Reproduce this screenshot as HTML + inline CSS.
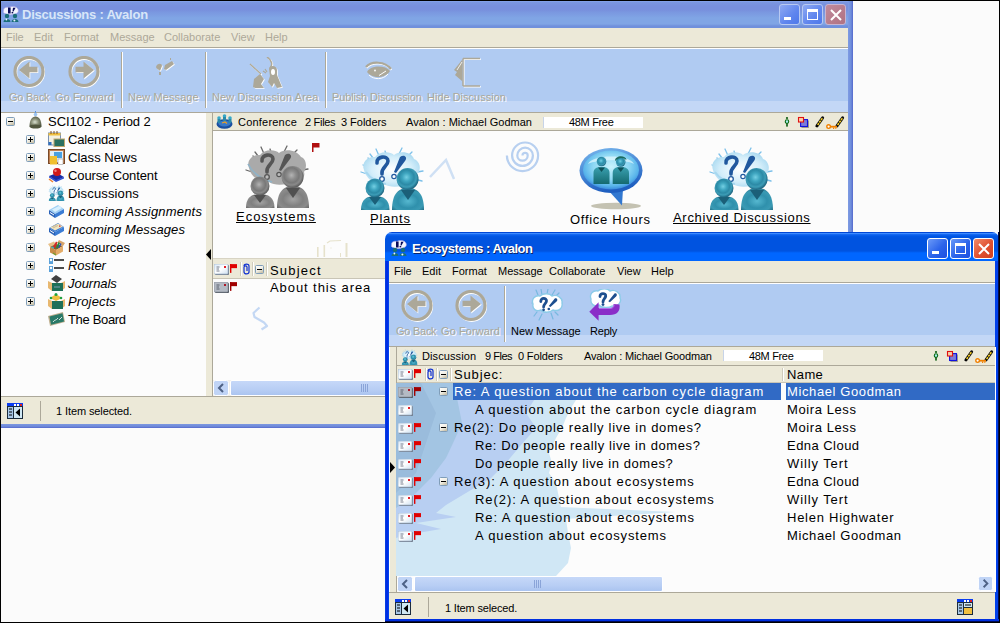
<!DOCTYPE html>
<html><head><meta charset="utf-8"><style>
*{margin:0;padding:0;box-sizing:border-box}
html,body{width:1000px;height:623px;overflow:hidden;background:#fbfbfb;font-family:"Liberation Sans",sans-serif;font-size:11px;color:#000}
.a{position:absolute}
.t{position:absolute;white-space:nowrap;line-height:11px}
.tr{position:absolute;white-space:nowrap;line-height:13px;font-size:13px}
.lt{position:absolute;white-space:nowrap;line-height:13px;font-size:13px;letter-spacing:0.85px}
.lbl{position:absolute;white-space:nowrap;line-height:13px;font-size:13px;letter-spacing:0.6px}
.u{text-decoration:underline}
.dis{position:absolute;white-space:nowrap;line-height:11px;color:#aca899;text-shadow:1px 1px 0 #fff}
.sep{position:absolute;width:2px;border-left:1px solid #aca899;border-right:1px solid #fff}
.cb{position:absolute;width:21px;height:21px;border:1px solid #fff;border-radius:3px}
#frame{position:absolute;left:0;top:0;width:1000px;height:623px;border:1px solid #000;z-index:50;pointer-events:none}
</style></head><body>
<svg width="0" height="0" style="position:absolute">
<defs>
  <radialGradient id="gTeal" cx="0.45" cy="0.42" r="0.62"><stop offset="0" stop-color="#74cfe3"/><stop offset="0.3" stop-color="#3fa6c0"/><stop offset="0.55" stop-color="#2c8aa6"/><stop offset="0.72" stop-color="#3c9cb6"/><stop offset="0.88" stop-color="#236f8a"/><stop offset="1" stop-color="#185a72"/></radialGradient>
  <radialGradient id="gTealB" cx="0.5" cy="0.6" r="0.7"><stop offset="0" stop-color="#56b8d0"/><stop offset="0.45" stop-color="#2f90ac"/><stop offset="0.7" stop-color="#3a9ab4"/><stop offset="1" stop-color="#175a72"/></radialGradient>
  <radialGradient id="gGray" cx="0.45" cy="0.42" r="0.62"><stop offset="0" stop-color="#b4b4b4"/><stop offset="0.3" stop-color="#8e8e8e"/><stop offset="0.55" stop-color="#787878"/><stop offset="0.72" stop-color="#8a8a8a"/><stop offset="0.88" stop-color="#656565"/><stop offset="1" stop-color="#505050"/></radialGradient>
  <radialGradient id="gGrayB" cx="0.5" cy="0.6" r="0.7"><stop offset="0" stop-color="#a4a4a4"/><stop offset="0.45" stop-color="#808080"/><stop offset="0.7" stop-color="#8c8c8c"/><stop offset="1" stop-color="#555"/></radialGradient>
  <radialGradient id="gCloud" cx="0.5" cy="0.5" r="0.6"><stop offset="0" stop-color="#ffffff"/><stop offset="0.6" stop-color="#d4eefa"/><stop offset="1" stop-color="#9fd4ee"/></radialGradient>
  <radialGradient id="gBub" cx="0.45" cy="0.4" r="0.6"><stop offset="0" stop-color="#b9ecfb"/><stop offset="0.6" stop-color="#7ccdf0"/><stop offset="1" stop-color="#2d7fd0"/></radialGradient>

  <!-- people + cloud, teal -->
  <symbol id="pplT" viewBox="0 0 64 64">
    <g stroke="#7cc0ea" stroke-width="1.3" stroke-linecap="round">
      <path d="M8 12l5 5M16 3l4 9M25 5l2 6M42 2l-4 8M52 6l-5 5M57 26l6-1M58 34l4 1M1 26l6 2M3 19l6 2M10 8l3 4"/>
    </g>
    <path d="M4 24 C1 16 8 10 15 11 C19 5 30 5 34 9 C40 4 52 6 54 13 C60 15 62 24 57 28 C60 34 54 38 48 36 C42 42 30 42 24 38 C16 40 6 33 4 24Z" fill="url(#gCloud)"/>
    <path d="M6 26 C10 32 18 37 26 38" stroke="#a8d8f0" stroke-width="2" fill="none"/>
    <path d="M17 17 C16 10 28 9 28 15 C28 20 21 21 22 28" fill="none" stroke="#20589e" stroke-width="3.6" stroke-linecap="round"/>
    <circle cx="22" cy="33" r="2.3" fill="#fff" stroke="#20589e" stroke-width="1.3"/>
    <path d="M40 11 C44 8 48 11 45 15 L36 27 L34 26Z" fill="#20589e"/>
    <circle cx="34" cy="30.5" r="2.2" fill="#fff" stroke="#20589e" stroke-width="1.2"/>
    <path d="M1 64 C1 53 7 50 15 50 C23 50 29.5 53 29.5 64Z" fill="url(#gTealB)"/>
    <path d="M9 51 L15 59 L21 51Z" fill="#1b5f78"/>
    <circle cx="15" cy="42" r="9.5" fill="url(#gTeal)"/>
    <path d="M32 64 C32 47 39 42 48 42 C57 42 64 47 64 64Z" fill="url(#gTealB)"/>
    <path d="M41 44 L48 54 L55 44Z" fill="#1b5f78"/>
    <circle cx="47.6" cy="33" r="11" fill="url(#gTeal)"/>
  </symbol>
  <!-- people + cloud, gray -->
  <symbol id="pplG" viewBox="0 0 64 64">
    <g stroke="#6a6a6a" stroke-width="1.3" stroke-linecap="round">
      <path d="M8 12l5 5M16 3l4 9M25 5l2 6M42 2l-4 8M52 6l-5 5M57 26l6-1M1 26l6 2M10 8l3 4"/>
    </g>
    <path d="M4 24 C1 16 8 10 15 11 C19 5 30 5 34 9 C40 4 52 6 56 13 C62 15 62 24 59 28 C61 34 54 38 48 36 C42 42 30 42 24 38 C16 40 6 33 4 24Z" fill="#aaaaaa"/>
    <path d="M3 20 C8 30 18 36 27 38" stroke="#8fb3c8" stroke-width="1.6" fill="none"/>
    <path d="M17 17 C16 10 28 9 28 15 C28 20 21 21 22 28" fill="none" stroke="#555" stroke-width="3.6" stroke-linecap="round"/>
    <circle cx="22" cy="33" r="2.3" fill="#bbb" stroke="#555" stroke-width="1.3"/>
    <path d="M40 11 C44 8 48 11 45 15 L36 27 L34 26Z" fill="#555"/>
    <circle cx="34" cy="30.5" r="2.2" fill="#bbb" stroke="#555" stroke-width="1.2"/>
    <path d="M1 64 C1 53 7 50 15 50 C23 50 29.5 53 29.5 64Z" fill="url(#gGrayB)"/>
    <path d="M9 51 L15 59 L21 51Z" fill="#505050"/>
    <circle cx="15" cy="42" r="9.5" fill="url(#gGray)"/>
    <path d="M32 64 C32 47 39 42 48 42 C57 42 64 47 64 64Z" fill="url(#gGrayB)"/>
    <path d="M41 44 L48 54 L55 44Z" fill="#505050"/>
    <circle cx="47.6" cy="33" r="11" fill="url(#gGray)"/>
  </symbol>
  <!-- cloud with ?! small (toolbar) -->
  <symbol id="cloudQ" viewBox="0 0 32 32">
    <g stroke="#78b8e0" stroke-width="1.2" stroke-linecap="round"><path d="M5 1l2 5M10 0l1 6M17 0l-1 5M24 1l-3 5M28 4l-3 3M3 27l3-4M8 31l3-6M22 30l-2-6M27 26l-3-3M1 14h2M31 14h-2"/></g>
    <path d="M2 15 C0 10 4 6 9 7 C12 4 19 4 21 7 C26 5 32 9 31 14 C32 19 28 23 22 21 C19 24 12 24 10 21 C5 23 1 20 2 15Z" fill="#fff" stroke="#8ccbe8" stroke-width="1.4"/>
    <path d="M9.8 12.5 C9.5 8.5 15.8 8.5 15.5 12 C15.3 14.5 12.6 15 12.6 18" fill="none" stroke="#1d4f8f" stroke-width="2.8" stroke-linecap="round"/>
    <circle cx="12.6" cy="20.8" r="1.4" fill="#1d4f8f"/>
    <path d="M24 9.3 C26.2 8.6 27.2 11 25.6 12.4 L19.4 18 L17.8 17Z" fill="#1d4f8f"/>
    <circle cx="17.8" cy="20" r="1.3" fill="#1d4f8f"/>
  </symbol>
  <!-- envelope -->
  <linearGradient id="gEnv" x1="0" y1="0" x2="1" y2="1"><stop offset="0" stop-color="#d8e8f8"/><stop offset="0.5" stop-color="#ffffff"/><stop offset="1" stop-color="#cfe0f0"/></linearGradient>
  <symbol id="env" viewBox="0 0 15 11">
    <rect x="1" y="1" width="14" height="10" rx="1" fill="#6a7484"/>
    <rect x="0" y="0" width="14" height="10" rx="1" fill="url(#gEnv)" stroke="#a8bcd0" stroke-width="0.8"/>
    <path d="M2.5 3h3M2.5 5h2.5M2.5 7h3" stroke="#6a7080" stroke-width="0.9"/>
    <rect x="10" y="2" width="2" height="2" fill="#e02028"/>
  </symbol>
  <symbol id="envG" viewBox="0 0 15 11">
    <rect x="1" y="1" width="14" height="10" rx="1" fill="#4a525c"/>
    <rect x="0" y="0" width="14" height="10" rx="1" fill="#b4bac4" stroke="#8a929c" stroke-width="0.8"/>
    <path d="M2.5 3h3M2.5 5h2.5M2.5 7h3" stroke="#505864" stroke-width="0.9"/>
    <rect x="10" y="2" width="2" height="2" fill="#b01828"/>
  </symbol>
  <symbol id="flag" viewBox="0 0 8 10"><rect x="0" y="0" width="1.6" height="10" fill="currentColor"/><rect x="0" y="0" width="8" height="4.6" fill="currentColor"/></symbol>
  <linearGradient id="gBox" x1="0" y1="0" x2="0.6" y2="1"><stop offset="0" stop-color="#ffffff"/><stop offset="0.6" stop-color="#f0eee4"/><stop offset="1" stop-color="#c8c0a8"/></linearGradient>
  <symbol id="minus" viewBox="0 0 9 9"><rect x="0.5" y="0.5" width="8" height="8" rx="1" fill="url(#gBox)" stroke="#7f9db9"/><rect x="2" y="4" width="5" height="1" fill="#000"/></symbol>
  <symbol id="plus" viewBox="0 0 9 9"><rect x="0.5" y="0.5" width="8" height="8" rx="1" fill="url(#gBox)" stroke="#7f9db9"/><rect x="2" y="4" width="5" height="1" fill="#000"/><rect x="4" y="2" width="1" height="5" fill="#000"/></symbol>
  <symbol id="clip" viewBox="0 0 7 12"><path d="M1 3 C1 0.5 6 0.5 6 3 V9 C6 11.5 1 11.5 1 9 V4 C1 2.5 4 2.5 4 4 V8" fill="none" stroke="#1030d0" stroke-width="1.2"/></symbol>
  <!-- circle arrows (disabled) -->
  <symbol id="goBack" viewBox="0 0 32 32">
    <circle cx="16" cy="15.5" r="14" fill="none" stroke="#fff" stroke-width="3" transform="translate(0.7 0.9)"/>
    <circle cx="16" cy="15.5" r="14" fill="none" stroke="#aca899" stroke-width="3.2"/>
    <path d="M6 14 L16.5 5.5 V10.7 H24.5 V16.2 H16.5 V22.6Z" fill="#fff" transform="translate(0.8 0.8)"/>
    <path d="M6 14 L16.5 5.5 V10.7 H24.5 V16.2 H16.5 V22.6Z" fill="#aca899"/>
  </symbol>
  <symbol id="goFwd" viewBox="0 0 32 32">
    <circle cx="16" cy="15.5" r="14" fill="none" stroke="#fff" stroke-width="3" transform="translate(0.7 0.9)"/>
    <circle cx="16" cy="15.5" r="14" fill="none" stroke="#aca899" stroke-width="3.2"/>
    <path d="M26 14 L15.5 5.5 V10.7 H7.5 V16.2 H15.5 V22.6Z" fill="#fff" transform="translate(0.8 0.8)"/>
    <path d="M26 14 L15.5 5.5 V10.7 H7.5 V16.2 H15.5 V22.6Z" fill="#aca899"/>
  </symbol>
  <!-- status icons -->
  <symbol id="stL" viewBox="0 0 16 16">
    <rect x="0" y="0" width="16" height="16" fill="#1c2c3c"/>
    <rect x="0" y="0" width="16" height="3" fill="#0a3cf0"/>
    <rect x="7" y="1" width="2" height="2" fill="#fff"/><rect x="10" y="1" width="2" height="2" fill="#fff"/><rect x="13" y="1" width="2" height="2" fill="#e02020"/>
    <rect x="1" y="4" width="5" height="11" fill="#a8c8e8"/>
    <rect x="7" y="4" width="8" height="11" fill="#d0e8f4"/>
    <path d="M2 6h3M2 9h3M2 12h3" stroke="#000" stroke-width="1.2"/>
    <path d="M13 5.5 L8.5 9.5 L13 13.5Z" fill="#000"/>
  </symbol>
  <symbol id="stR" viewBox="0 0 16 16">
    <rect x="0" y="0" width="16" height="16" fill="#1c2c3c"/>
    <rect x="0" y="0" width="16" height="3" fill="#0a3cf0"/>
    <rect x="7" y="1" width="2" height="2" fill="#fff"/><rect x="10" y="1" width="2" height="2" fill="#fff"/><rect x="13" y="1" width="2" height="2" fill="#e02020"/>
    <rect x="1" y="4" width="5" height="11" fill="#a8c8e8"/>
    <rect x="7" y="4" width="8" height="4" fill="#d0e8f4"/>
    <rect x="7" y="9" width="8" height="6" fill="#f0c040"/>
    <path d="M2 6h3M2 9h3M2 12h3M8 6h6" stroke="#000" stroke-width="1.2"/>
  </symbol>
  <!-- header icons -->
  <symbol id="hdrIcons" viewBox="0 0 62 16">
    <circle cx="4" cy="3" r="1.1" fill="#0a5a10"/>
    <ellipse cx="4" cy="6.6" rx="1.7" ry="1.9" fill="#a8ecf4" stroke="#0a6a10" stroke-width="1.1"/>
    <rect x="3.2" y="8.4" width="1.6" height="3.2" fill="#0a5a10"/>
    <rect x="17.6" y="4.6" width="6.9" height="6.9" fill="#7c7cd8" stroke="#1010e0" stroke-width="1.1"/>
    <rect x="25" y="5.5" width="0.8" height="6.8" fill="#8a8878"/><rect x="18.5" y="12" width="7.3" height="0.8" fill="#8a8878"/>
    <rect x="15.5" y="2.5" width="5" height="4.5" fill="#f8d0a8" stroke="#e01010" stroke-width="1.1"/>
    <path d="M34 10.8 L39.6 2.8" stroke="#101010" stroke-width="3" stroke-linecap="round"/>
    <path d="M34.6 10 L39.4 3.2" stroke="#f8d020" stroke-width="1.5" stroke-dasharray="2.2 0.8"/>
    <path d="M33 11.8 L34.5 10" stroke="#000" stroke-width="1.4"/>
    <path d="M54 10.8 L59.6 2.8" stroke="#101010" stroke-width="3" stroke-linecap="round"/>
    <path d="M54.6 10 L59.4 3.2" stroke="#f8d020" stroke-width="1.5" stroke-dasharray="2.2 0.8"/>
    <circle cx="45.6" cy="11.6" r="1.8" fill="#fff" stroke="#f08000" stroke-width="1.4"/>
    <rect x="47" y="10.8" width="7" height="1.8" fill="#f08000"/>
    <rect x="50" y="12.4" width="1.2" height="1.6" fill="#f08000"/><rect x="52.2" y="12.4" width="1.2" height="1.4" fill="#f08000"/>
  </symbol>
  <!-- scroll buttons -->
  <symbol id="sbL" viewBox="0 0 16 16">
    <rect x="0.5" y="0.5" width="15" height="15" rx="2" fill="#c0d4f6" stroke="#fff"/>
    <path d="M10 4 L6 8 L10 12" fill="none" stroke="#4d6185" stroke-width="2"/>
  </symbol>
  <symbol id="sbR" viewBox="0 0 16 16">
    <rect x="0.5" y="0.5" width="15" height="15" rx="2" fill="#c0d4f6" stroke="#fff"/>
    <path d="M6 4 L10 8 L6 12" fill="none" stroke="#4d6185" stroke-width="2"/>
  </symbol>
  <!-- title icon -->
  <symbol id="ttlIcon" viewBox="0 0 16 16">
    <path d="M0.5 5 C0 2 3 0.5 6 1.5 C8 0 13 0 14.5 2.5 C16 4 15.5 7 13 7.5 C11 9 4 9 2.5 7.5 C0.5 7.5 0 6 0.5 5Z" fill="#f4f6ff" stroke="#a8a0e8" stroke-width="0.6"/>
    <path d="M5 1.5 h2.6 v6 h-2.6z" fill="#0a0a5a"/>
    <path d="M10 1.8 L12.6 1.8 L10.5 5.5 L9.5 5.5z" fill="#0a0a5a"/><rect x="8.6" y="6" width="1.6" height="1.4" fill="#0a0a5a"/>
    <circle cx="4" cy="10" r="2.2" fill="#1a6e78"/><path d="M0.5 16 C0.5 12 7.5 12 7.5 16Z" fill="#1a6e78"/>
    <circle cx="3.4" cy="13.5" r="0.9" fill="#e8f4ff"/>
    <circle cx="12" cy="10" r="2.2" fill="#1a6e78"/><path d="M8.5 16 C8.5 12 15.5 12 15.5 16Z" fill="#1a6e78"/>
    <circle cx="11.4" cy="14.6" r="1" fill="#e8f4ff"/>
  </symbol>
</defs>
</svg>

<!-- ============ W1 background window ============ -->
<div id="w1" class="a" style="left:0;top:0;width:853px;height:428px;">
  <div class="a" style="left:0;top:0;width:853px;height:28px;background:linear-gradient(#8aaaf0 0,#8aaaf0 1px,#7b97e0 2px,#7890dd 6px,#7890dd 10px,#7a97e0 12px,#80a5e5 18px,#80a5e5 24px,#7090dc 26px,#7090dc 28px)"></div>
  <svg class="a" style="left:3px;top:6px" width="16" height="16"><use href="#ttlIcon"/></svg>
  <div class="t" style="left:22px;top:9px;font-size:13px;font-weight:bold;color:#d8e6f8;letter-spacing:-0.3px;letter-spacing:-0.23px">Discussions : Avalon</div>
  <!-- caption buttons inactive -->
  <div class="cb" style="left:779px;top:4px;background:linear-gradient(135deg,#8ea9f2,#5f85ee 60%,#4e78ea);border-color:#b8c9f2"><div class="a" style="left:4px;top:12px;width:7px;height:3px;background:#fff"></div></div>
  <div class="cb" style="left:802px;top:4px;background:linear-gradient(135deg,#8ea9f2,#5f85ee 60%,#4e78ea);border-color:#b8c9f2"><div class="a" style="left:4px;top:4px;width:11px;height:11px;border:1px solid #fff;border-top-width:3px"></div></div>
  <div class="cb" style="left:825px;top:4px;background:linear-gradient(135deg,#c08a9c,#b07282);border-color:#c8b4d0">
    <svg class="a" style="left:4px;top:4px" width="12" height="12"><path d="M1 1L11 11M11 1L1 11" stroke="#fff" stroke-width="2"/></svg></div>
  <!-- right border -->
  <div class="a" style="left:848px;top:0;width:5px;height:428px;background:linear-gradient(90deg,#7e9be3,#6f8edb 60%,#5468cc)"></div>
  <div class="a" style="left:0;top:424px;width:853px;height:4px;background:linear-gradient(#7d98e0,#6f8ad9 60%,#5468cc)"></div>
  <!-- menu -->
  <div class="a" style="left:1px;top:28px;width:847px;height:20px;background:#ece9d8"></div>
  <div class="a" style="left:1px;top:47px;width:847px;height:1px;background:#aca899"></div>
  <div class="a" style="left:1px;top:48px;width:847px;height:1px;background:#fff"></div>
  <div style="color:#aca899">
    <div class="t" style="left:6px;top:32px">File</div>
    <div class="t" style="left:34px;top:32px">Edit</div>
    <div class="t" style="left:64px;top:32px">Format</div>
    <div class="t" style="left:110px;top:32px">Message</div>
    <div class="t" style="left:164px;top:32px">Collaborate</div>
    <div class="t" style="left:231px;top:32px">View</div>
    <div class="t" style="left:265px;top:32px">Help</div>
  </div>
  <!-- toolbar -->
  <div class="a" style="left:1px;top:49px;width:847px;height:52px;background:#b0cbf2"></div>
  <div class="a" style="left:1px;top:101px;width:847px;height:11px;background:#c3d7f6"></div>
  <div class="a" style="left:1px;top:112px;width:847px;height:1px;background:#aca899"></div>
  <div class="sep" style="left:121px;top:52px;height:56px"></div>
  <div class="sep" style="left:205px;top:52px;height:56px"></div>
  <div class="sep" style="left:325px;top:52px;height:56px"></div>
  <svg class="a" style="left:13px;top:56px" width="32" height="32"><use href="#goBack"/></svg>
  <svg class="a" style="left:68px;top:56px" width="32" height="32"><use href="#goFwd"/></svg>
  <!-- disabled new message -->
  <svg class="a" style="left:154px;top:57px" width="22" height="21" viewBox="0 0 22 21">
    <path d="M2 10 C3 6 8 6 8 9 L6 14 C5 12 3 13 2 10Z M11 8 L18 4 L20 7 L12 13 L10 12Z M4 16 l2 3 M16 1 l1 2" fill="#fff" transform="translate(0.8 0.8)"/>
    <path d="M2 10 C3 6 8 6 8 9 L6 14 C5 12 3 13 2 10Z M11 8 L18 4 L20 7 L12 13 L10 12Z M5 15 h2v3h-2z M16 1 h1v2h-1z" fill="#aca899"/>
  </svg>
  <!-- disabled new discussion area -->
  <svg class="a" style="left:249px;top:57px" width="34" height="32" viewBox="0 0 34 32">
    <g transform="translate(0.8 0.8)" fill="#fff" stroke="none">
      <path d="M18 0 C23 3 24 8 21 11" fill="none" stroke="#fff" stroke-width="1.5"/>
      <path d="M1 7 L12 17" stroke="#fff" stroke-width="1.4"/>
      <path d="M4 30 L5 22 L11 17 L15 22 L12 27 L15 31 L6 31Z"/>
      <path d="M20 12 C20 8 28 8 28 13 L28 18 L33 30 L28 31 L25 26 L23 30 L19 25 L21 19Z"/>
    </g>
    <path d="M18 0 C23 3 24 8 21 11" fill="none" stroke="#aca899" stroke-width="1.5"/>
    <path d="M1 7 L12 17" stroke="#aca899" stroke-width="1.4"/>
    <path d="M4 30 L5 22 L11 17 L15 22 L12 27 L15 31 L6 31Z" fill="#aca899"/>
    <path d="M20 12 C20 8 28 8 28 13 L28 18 L33 30 L28 31 L25 26 L23 30 L19 25 L21 19Z" fill="#aca899"/>
    <ellipse cx="24" cy="15" rx="2" ry="3" fill="#fff"/>
    <path d="M14 14 l3 2 M16 12 l2 3" stroke="#aca899" stroke-width="1.2"/>
  </svg>
  <!-- eye -->
  <svg class="a" style="left:365px;top:60px" width="27" height="22" viewBox="0 0 27 22">
    <path d="M1 7 C6 1 20 1 26 9" fill="none" stroke="#fff" stroke-width="2" transform="translate(0.6 0.8)"/>
    <path d="M1 7 C6 1 20 1 26 9" fill="none" stroke="#aca899" stroke-width="2.2"/>
    <path d="M2 12 C6 5 20 5 25 11 C20 19 7 19 2 12 Z" fill="#aca899"/>
    <path d="M4 15 C9 20 18 20 23 14" fill="none" stroke="#fff" stroke-width="1"/>
    <path d="M14 15.5 L21 11" fill="none" stroke="#fff" stroke-width="1"/>
    <circle cx="10" cy="10.5" r="0.9" fill="#fff"/>
  </svg>
  <!-- hide -->
  <svg class="a" style="left:453px;top:57px" width="29" height="31" viewBox="0 0 29 31">
    <path d="M10 1.5 H27 M10 29 H27 M10 1.5 V29" fill="none" stroke="#fff" stroke-width="1.5" transform="translate(0.8 0.8)"/>
    <path d="M10 1.5 H27 M10 29 H27 M10 1.5 V29" fill="none" stroke="#aca899" stroke-width="1.5"/>
    <path d="M9 3 L1 13 L4 15 L2 18 L9 24Z" fill="#aca899"/>
    <path d="M9 5 L4 13" stroke="#fff" stroke-width="0.8"/>
  </svg>
  <div class="dis" style="left:9px;top:92px;letter-spacing:-0.26px">Go Back</div>
  <div class="dis" style="left:55px;top:92px;letter-spacing:0.1px">Go Forward</div>
  <div class="dis" style="left:128px;top:92px;letter-spacing:0.1px">New Message</div>
  <div class="dis" style="left:212px;top:92px;letter-spacing:0.14px">New Discussion Area</div>
  <div class="dis" style="left:332px;top:92px;letter-spacing:-0.2px;letter-spacing:-0.14px">Publish Discussion</div>
  <div class="dis" style="left:427px;top:92px">Hide Discussion</div>

  <!-- tree panel -->
  <div class="a" style="left:1px;top:113px;width:205px;height:283px;background:#fcfcfc"></div>
  <div class="a" style="left:206px;top:113px;width:6px;height:283px;background:#ece9d8"></div>
  <div class="a" style="left:212px;top:113px;width:1px;height:283px;background:#aca899"></div>
  <svg class="a" style="left:206px;top:249px" width="6" height="11"><path d="M5 0 L0 5.5 L5 11Z" fill="#000"/></svg>
  <div id="tree">
    <svg class="a" style="left:6px;top:117px" width="9" height="9"><use href="#minus"/></svg>
    <svg class="a" style="left:29px;top:111px" width="13" height="18" viewBox="0 0 13 18">
      <defs><radialGradient id="gBell" cx="0.45" cy="0.55" r="0.6"><stop offset="0" stop-color="#d8e0d0"/><stop offset="0.5" stop-color="#8a9078"/><stop offset="1" stop-color="#4e5440"/></radialGradient></defs>
      <rect x="6" y="0" width="1" height="4" fill="#5a90d8"/><circle cx="6.5" cy="3.5" r="1.8" fill="#9cc4f0"/>
      <path d="M0.5 15.5 C0.5 9 3 5.5 6.5 5.5 C10 5.5 12.5 9 12.5 15.5 Z" fill="url(#gBell)"/>
      <ellipse cx="6.5" cy="15.5" rx="6" ry="2" fill="#50563e"/>
    </svg>
    <div class="tr" style="left:48px;top:115px;letter-spacing:-0.03px">SCI102 - Period 2</div>

    <svg class="a" style="left:26px;top:135px" width="9" height="9"><use href="#plus"/></svg>
    <svg class="a" style="left:26px;top:153px" width="9" height="9"><use href="#plus"/></svg>
    <svg class="a" style="left:26px;top:171px" width="9" height="9"><use href="#plus"/></svg>
    <svg class="a" style="left:26px;top:189px" width="9" height="9"><use href="#plus"/></svg>
    <svg class="a" style="left:26px;top:207px" width="9" height="9"><use href="#plus"/></svg>
    <svg class="a" style="left:26px;top:225px" width="9" height="9"><use href="#plus"/></svg>
    <svg class="a" style="left:26px;top:243px" width="9" height="9"><use href="#plus"/></svg>
    <svg class="a" style="left:26px;top:261px" width="9" height="9"><use href="#plus"/></svg>
    <svg class="a" style="left:26px;top:279px" width="9" height="9"><use href="#plus"/></svg>
    <svg class="a" style="left:26px;top:297px" width="9" height="9"><use href="#plus"/></svg>

    <!-- calendar -->
    <svg class="a" style="left:48px;top:131px" width="17" height="16" viewBox="0 0 17 16">
      <rect x="0.5" y="2" width="12" height="12" fill="#f4f0e0" stroke="#7a90b0"/>
      <rect x="0.5" y="2" width="12" height="2.5" fill="#f0c040"/>
      <path d="M3 0v3M6 0v3M9 0v3" stroke="#805020"/>
      <rect x="0.5" y="11" width="3" height="3" fill="#3070c0"/>
      <rect x="6" y="8" width="10.5" height="7.5" fill="#2a7060" stroke="#c0a870"/>
    </svg>
    <!-- class news -->
    <svg class="a" style="left:48px;top:149px" width="17" height="16" viewBox="0 0 17 16">
      <rect x="0.5" y="0.5" width="16" height="14" fill="#c08050" stroke="#7a4a28"/>
      <rect x="2" y="2" width="13" height="11" fill="#e0eef8"/>
      <rect x="6" y="3" width="8" height="6" fill="#4aa0e0"/>
      <rect x="2" y="7" width="7" height="8.5" fill="#f0c030"/>
      <rect x="10" y="10" width="5" height="5.5" fill="#fff" stroke="#888" stroke-width="0.5"/>
    </svg>
    <!-- course content -->
    <svg class="a" style="left:48px;top:167px" width="17" height="16" viewBox="0 0 17 16">
      <path d="M1 9 L9 6 L16 10 L8 14Z" fill="#1a2aa0"/><path d="M1 9 L8 13 L16 10 L16 11.5 L8 15 L1 10.5Z" fill="#3050d0"/>
      <circle cx="9" cy="5" r="4" fill="#d01818"/><circle cx="7.5" cy="3.8" r="1.2" fill="#f08080"/>
      <path d="M1 12 L5 15" stroke="#f08030" stroke-width="1.5"/>
    </svg>
    <!-- discussions -->
    <svg class="a" style="left:48px;top:185px" width="17" height="16" viewBox="0 0 64 64"><use href="#pplT"/></svg>
    <!-- incoming assignments -->
    <svg class="a" style="left:48px;top:203px" width="17" height="16" viewBox="0 0 17 16">
      <path d="M1 7 L10 2 L16 6 L7 11Z" fill="#a0d0f4"/>
      <path d="M4 6.5 L11 3 L14 5 L7 9Z" fill="#d8f0ff"/>
      <path d="M1 7 L7 11 L7 15 L1 11Z" fill="#2a62b8"/>
      <path d="M7 11 L16 6 L16 10 L7 15Z" fill="#3a7cd4"/>
      <path d="M2 9.5 L6 12" stroke="#fff" stroke-width="1"/>
    </svg>
    <!-- incoming messages -->
    <svg class="a" style="left:48px;top:221px" width="17" height="16" viewBox="0 0 17 16">
      <path d="M1 7 L10 2 L16 6 L7 11Z" fill="#3a7cd4"/>
      <path d="M2 6.5 L10 2.5 L15 5.5 L7 9.5Z" fill="#f0e4c0"/>
      <path d="M4 6 L9 3.5 M5 7 L10 4.5" stroke="#b0a080" stroke-width="0.6"/>
      <rect x="11" y="4.5" width="1.5" height="1.2" fill="#d02020"/>
      <path d="M1 7 L7 11 L7 15 L1 11Z" fill="#2a62b8"/>
      <path d="M7 11 L16 6 L16 10 L7 15Z" fill="#3a7cd4"/>
      <path d="M2 9.5 L6 12" stroke="#fff" stroke-width="1"/>
    </svg>
    <!-- resources -->
    <svg class="a" style="left:48px;top:239px" width="17" height="17" viewBox="0 0 17 17">
      <path d="M2 8 L0 5 L6 2.5 L8 5.5Z" fill="#e8c088"/>
      <path d="M15 7 L17 4 L11 1 L9 4Z" fill="#d8a468"/>
      <path d="M2 8 L8 5 L15 7 L8 11Z" fill="#8a5a28"/>
      <path d="M5 8 L8 2.5 L9.5 3.5 L7 9Z" fill="#d02828"/>
      <path d="M8 9 L10.5 3 L12 4 L9.5 9.5Z" fill="#208848"/>
      <path d="M10 9 L12.5 4 L13.5 5 L11 9.5Z" fill="#2050c0"/>
      <circle cx="4.5" cy="9" r="1.5" fill="#40b0c0"/>
      <path d="M2 8 L8 11 L8 16.5 L2 13.5Z" fill="#c88c48"/>
      <path d="M8 11 L15 7 L15 12.5 L8 16.5Z" fill="#e4ac68"/>
      <path d="M5 14 L8 16" stroke="#70a030" stroke-width="1.2"/>
    </svg>
    <!-- roster -->
    <svg class="a" style="left:48px;top:257px" width="17" height="16" viewBox="0 0 17 16">
      <rect x="1" y="1" width="4" height="6" fill="#5aa0d8"/><rect x="1" y="9" width="4" height="6" fill="#5aa0d8"/>
      <circle cx="3" cy="3" r="1.2" fill="#fff"/><circle cx="3" cy="11" r="1.2" fill="#fff"/>
      <path d="M6 3 H16 M6 11 H16" stroke="#111" stroke-width="1.5"/>
    </svg>
    <!-- journals -->
    <svg class="a" style="left:48px;top:275px" width="17" height="16" viewBox="0 0 17 16">
      <path d="M0 6 L4 8 L4 16 L0 13Z M17 6 L13 8 L13 16 L17 13Z" fill="#e8b870"/>
      <path d="M3 4 L8 0 L14 4 L9 8Z" fill="#404040"/>
      <rect x="4" y="8" width="11" height="8" fill="#1f7058"/>
      <path d="M6 12 h6" stroke="#9ac" stroke-width="0.8"/>
    </svg>
    <!-- projects -->
    <svg class="a" style="left:48px;top:293px" width="17" height="16" viewBox="0 0 17 16">
      <path d="M0 6 L4 8 L4 16 L0 13Z M17 6 L13 8 L13 16 L17 13Z" fill="#e8b870"/>
      <path d="M2 5 L8 1 L14 5 L8 8Z" fill="#f0c040"/>
      <circle cx="8" cy="1.5" r="1.5" fill="#20a040"/><circle cx="3" cy="5" r="1.3" fill="#20a040"/><circle cx="13" cy="5" r="1.3" fill="#20a040"/>
      <rect x="4" y="8" width="11" height="8" fill="#1f7058"/>
    </svg>
    <!-- the board -->
    <svg class="a" style="left:48px;top:311px" width="17" height="16" viewBox="0 0 17 16">
      <path d="M0 5 L15 1 L17 11 L2 15Z" fill="#c0b090"/>
      <path d="M1.5 5.5 L14.5 2.2 L16 10.5 L3 13.8Z" fill="#2a7a68"/>
      <path d="M5 11 C7 8 8 10 10 7 M11 9 L14 6" stroke="#fff" stroke-width="0.8" fill="none"/>
    </svg>

    <div class="tr" style="left:68px;top:133px;letter-spacing:-0.19px">Calendar</div>
    <div class="tr" style="left:68px;top:151px;letter-spacing:0.03px">Class News</div>
    <div class="tr" style="left:68px;top:169px;letter-spacing:-0.12px">Course Content</div>
    <div class="tr" style="left:68px;top:187px;letter-spacing:0.15px">Discussions</div>
    <div class="tr" style="left:68px;top:205px;font-style:italic;letter-spacing:0.19px">Incoming Assignments</div>
    <div class="tr" style="left:68px;top:223px;font-style:italic;letter-spacing:0.08px">Incoming Messages</div>
    <div class="tr" style="left:68px;top:241px;letter-spacing:-0.03px">Resources</div>
    <div class="tr" style="left:68px;top:259px;font-style:italic;letter-spacing:-0.07px">Roster</div>
    <div class="tr" style="left:68px;top:277px;font-style:italic;letter-spacing:-0.04px">Journals</div>
    <div class="tr" style="left:68px;top:295px;font-style:italic;letter-spacing:0.13px">Projects</div>
    <div class="tr" style="left:68px;top:313px;letter-spacing:-0.33px">The Board</div>
  </div>

  <!-- right pane -->
  <div class="a" style="left:213px;top:113px;width:635px;height:283px;background:#fcfcfc"></div>
  <div class="a" style="left:213px;top:113px;width:635px;height:17px;background:#ece9d8"></div>
  <div class="a" style="left:213px;top:130px;width:635px;height:1px;background:#aca899"></div>
  <svg class="a" style="left:216px;top:114px" width="17" height="15" viewBox="0 0 17 15">
    <ellipse cx="8.5" cy="10" rx="8" ry="4.8" fill="#1a4fa0"/>
    <ellipse cx="8.5" cy="9.5" rx="6" ry="3" fill="#3a78c8"/>
    <path d="M6 9 l3 -1 l2 1.5" stroke="#f0a020" stroke-width="1.2" fill="none"/>
    <circle cx="3" cy="4" r="1.8" fill="#38a8c8"/><rect x="1.5" y="5" width="3" height="4" fill="#2a88a8"/>
    <circle cx="8.5" cy="2" r="1.8" fill="#38a8c8"/><rect x="7" y="3" width="3" height="4" fill="#2a88a8"/>
    <circle cx="14" cy="4" r="1.8" fill="#38a8c8"/><rect x="12.5" y="5" width="3" height="4" fill="#2a88a8"/>
  </svg>
  <div class="t" style="left:238px;top:117px;letter-spacing:0.21px">Conference</div>
  <div class="t" style="left:305px;top:117px;letter-spacing:-0.3px">2 Files</div>
  <div class="t" style="left:341px;top:117px;letter-spacing:-0.03px">3 Folders</div>
  <div class="t" style="left:406px;top:117px;letter-spacing:0.01px">Avalon : Michael Godman</div>
  <div class="a" style="left:543px;top:117px;width:100px;height:11px;background:#fff;border-left:1px solid #c8d4e8"></div>
  <div class="t" style="left:569px;top:117px;letter-spacing:-0.33px">48M Free</div>
  <svg class="a" style="left:783px;top:115px" width="62" height="16"><use href="#hdrIcons"/></svg>

  <!-- big icons -->
  <svg class="a" style="left:245px;top:144px" width="64" height="64"><use href="#pplG"/></svg>
  <svg class="a" style="left:312px;top:143px" width="8" height="9"><rect x="0" y="0" width="1.5" height="9" fill="#b01010"/><rect x="0" y="0" width="7.5" height="4.5" fill="#b01010"/></svg>
  <div class="lbl u" style="left:236px;top:210px;letter-spacing:0.98px">Ecosystems</div>
  <svg class="a" style="left:360px;top:146px" width="64" height="64"><use href="#pplT"/></svg>
  <div class="lbl u" style="left:370px;top:212px;letter-spacing:0.75px">Plants</div>
  <svg class="a" style="left:428px;top:157px" width="28" height="24" viewBox="0 0 28 24"><path d="M2 20 L18 3 L26 22" fill="none" stroke="#cfe0f4" stroke-width="2.5"/></svg>
  <svg class="a" style="left:505px;top:138px" width="35" height="35" viewBox="0 0 35 35">
    <path d="M17 17 A2 2 0 0 1 21 17 A4 4 0 0 1 13 17 A6 6 0 0 1 25 17 A8 8 0 0 1 9 17 A10 10 0 0 1 29 17 A12 12 0 0 1 5 17" fill="none" stroke="#b8d0f0" stroke-width="1.7" transform="translate(17.5 17.5) scale(1.3) translate(-17 -17)"/>
  </svg>
  <!-- office hours -->
  <svg class="a" style="left:578px;top:146px" width="66" height="64" viewBox="0 0 66 64">
    <defs>
      <radialGradient id="gOH" cx="0.5" cy="0.42" r="0.58"><stop offset="0" stop-color="#c8f2fc"/><stop offset="0.55" stop-color="#8ed8f4"/><stop offset="0.85" stop-color="#58b4ea"/><stop offset="1" stop-color="#3a8ade"/></radialGradient>
      <linearGradient id="gOHrim" x1="0" y1="0" x2="0.3" y2="1"><stop offset="0" stop-color="#7ab8ee"/><stop offset="1" stop-color="#1f5fc0"/></linearGradient>
      <linearGradient id="gOHb" x1="0" y1="0" x2="0" y2="1"><stop offset="0" stop-color="#3aa0b0"/><stop offset="1" stop-color="#156a70"/></linearGradient>
    </defs>
    <ellipse cx="38" cy="60" rx="25" ry="3.2" fill="#c4c2b2"/>
    <path d="M30 44 L44 59.5 L45 43Z" fill="#3278d0"/>
    <ellipse cx="33" cy="24.5" rx="31.5" ry="22.5" fill="url(#gOHrim)"/>
    <ellipse cx="33" cy="24" rx="28" ry="19.5" fill="url(#gOH)"/>
    <path d="M10 18 C14 8 52 8 56 18 C46 13 20 13 10 18Z" fill="#e4faff" opacity="0.7"/>
    <circle cx="23.5" cy="15.5" r="4.8" fill="url(#gTeal)"/>
    <path d="M15.5 38 V27 C15.5 22 19 21 23.5 21 C28 21 31.5 22 31.5 27 V38Z" fill="url(#gOHb)"/>
    <path d="M20 21.5 L23.5 26 L27 21.5Z" fill="#0f5058"/>
    <circle cx="42.7" cy="16" r="4.8" fill="url(#gTeal)"/>
    <path d="M37 15 C37 9 48 9 48.5 14 L46 12.5 C44 11.5 40 11.5 37 15Z" fill="#1b6a60"/>
    <path d="M34.7 38 V27 C34.7 22 38 21 42.7 21 C47 21 51 22 51 27 V38Z" fill="url(#gOHb)"/>
    <path d="M39.2 21.5 L42.7 26 L46.2 21.5Z" fill="#0f5058"/>
  </svg>
  <div class="lbl" style="left:570px;top:213px;letter-spacing:0.72px">Office Hours</div>
  <svg class="a" style="left:709px;top:146px" width="64" height="64"><use href="#pplT"/></svg>
  <div class="lbl u" style="left:673px;top:211px;letter-spacing:0.7px">Archived Discussions</div>

  <!-- faint arc -->
  <svg class="a" style="left:315px;top:238px" width="34" height="20" viewBox="0 0 34 20">
    <g fill="#e6e2cc"><rect x="2" y="9" width="1.6" height="10"/><rect x="8.5" y="7" width="1.6" height="12"/><rect x="25" y="15" width="1" height="4"/><rect x="30.5" y="5" width="2" height="14"/><rect x="15.5" y="9.5" width="1" height="1"/></g>
    <path d="M12 5 L15 3 L26 2.5" stroke="#e6e2cc" stroke-width="1.2" fill="none"/>
  </svg>

  <!-- lower list -->
  <div class="a" style="left:213px;top:258px;width:635px;height:1px;background:#d8d4c4"></div>
  <div class="a" style="left:213px;top:259px;width:635px;height:19px;background:#ece9d8"></div>
  <div class="a" style="left:213px;top:278px;width:635px;height:1px;background:#c9c5b6"></div>
  <svg class="a" style="left:214px;top:264px" width="15" height="11"><use href="#env"/></svg>
  <svg class="a" style="left:230px;top:264px;color:#e00000" width="7" height="9"><use href="#flag"/></svg>
  <div class="a" style="left:240px;top:262px;width:2px;height:14px;border-left:1px solid #d0ccbc;border-right:1px solid #fff"></div>
  <svg class="a" style="left:243px;top:263px" width="7" height="12"><use href="#clip"/></svg>
  <div class="a" style="left:252px;top:262px;width:2px;height:14px;border-left:1px solid #d0ccbc;border-right:1px solid #fff"></div>
  <svg class="a" style="left:255px;top:265px" width="9" height="9"><use href="#minus"/></svg>
  <div class="a" style="left:266px;top:262px;width:2px;height:14px;border-left:1px solid #d0ccbc;border-right:1px solid #fff"></div>
  <div class="lt" style="left:270px;top:264px;letter-spacing:1.19px">Subject</div>
  <svg class="a" style="left:214px;top:282px" width="15" height="11"><use href="#envG"/></svg>
  <svg class="a" style="left:230px;top:282px;color:#a00000" width="7" height="9"><use href="#flag"/></svg>
  <div class="lt" style="left:270px;top:281px;letter-spacing:0.92px">About this area</div>
  <svg class="a" style="left:251px;top:306px" width="18" height="27" viewBox="0 0 18 27"><path d="M8.5 1.5 L2.5 7 L3.5 11 L13 16.5 L16 20 L10.5 23.5" fill="none" stroke="#c4d8f4" stroke-width="2.2" stroke-linejoin="round"/></svg>

  <!-- scrollbar -->
  <div class="a" style="left:213px;top:380px;width:635px;height:16px;background:#f3f1ec"></div>
  <svg class="a" style="left:213px;top:380px" width="16" height="16"><use href="#sbL"/></svg>
  <div class="a" style="left:230px;top:380px;width:620px;height:16px;border:1px solid #fff;border-radius:2px;background:linear-gradient(#c6d8f8,#b8cef4 60%,#aac4f0)"></div>
  <svg class="a" style="left:361px;top:384px" width="8" height="8"><path d="M0.5 0v8M2.5 0v8M4.5 0v8M6.5 0v8" stroke="#8aa4d8" stroke-width="1"/></svg>

  <!-- status bar -->
  <div class="a" style="left:1px;top:396px;width:847px;height:1px;background:#aca899"></div>
  <div class="a" style="left:1px;top:397px;width:847px;height:27px;background:#ece9d8"></div>
  <svg class="a" style="left:7px;top:403px" width="16" height="16"><use href="#stL"/></svg>
  <div class="a" style="left:40px;top:401px;width:1px;height:20px;background:#aca899"></div>
  <div class="t" style="left:56px;top:406px;;letter-spacing:-0.1px">1 Item selected.</div>
</div>

<!-- ============ W2 front window ============ -->
<div id="w2" class="a" style="left:385px;top:232px;width:615px;height:391px;">
  <div class="a" style="left:0;top:0;width:614px;height:30px;border-radius:7px 7px 0 0;background:linear-gradient(#0047d6 0,#0047d6 1px,#3d8bff 1px,#3d8bff 2px,#1a6cf5 2px,#0058e6 4px,#0053e0 6px,#0053e0 19px,#0066ff 21px,#0066ff 29px,#0047d6 29px)"></div>
  <div class="a" style="left:0;top:29px;width:4px;height:362px;background:linear-gradient(90deg,#0848e0,#0028e4 45%,#0030e8 70%,#0050f0)"></div>
  <div class="a" style="left:610px;top:29px;width:3px;height:362px;background:#0040ea"></div><div class="a" style="left:613px;top:0;width:1px;height:391px;background:#000a50"></div><div class="a" style="left:610px;top:115px;width:1px;height:245px;background:#fff"></div>
  <div class="a" style="left:0;top:387px;width:614px;height:2px;background:#0030e0"></div><div class="a" style="left:0;top:389px;width:614px;height:1px;background:#000a50"></div>
  <svg class="a" style="left:6px;top:8px" width="16" height="16"><use href="#ttlIcon"/></svg>
  <div class="t" style="left:27px;top:11px;font-size:13px;font-weight:bold;color:#fff;letter-spacing:-0.5px;text-shadow:1px 1px 0 #0a246a;letter-spacing:-0.49px">Ecosystems : Avalon</div>
  <!-- caption buttons -->
  <div class="cb" style="left:542px;top:6px;background:linear-gradient(135deg,#6b9af8,#2c64ea 55%,#1d50e0)"><div class="a" style="left:4px;top:12px;width:7px;height:3px;background:#fff"></div></div>
  <div class="cb" style="left:565px;top:6px;background:linear-gradient(135deg,#6b9af8,#2c64ea 55%,#1d50e0)"><div class="a" style="left:4px;top:4px;width:11px;height:11px;border:1px solid #fff;border-top-width:3px"></div></div>
  <div class="cb" style="left:588px;top:6px;background:linear-gradient(135deg,#f08a6a,#e05030 55%,#d04020)">
    <svg class="a" style="left:4px;top:4px" width="12" height="12"><path d="M1 1L11 11M11 1L1 11" stroke="#fff" stroke-width="2"/></svg></div>

  <!-- menu -->
  <div class="a" style="left:4px;top:29px;width:606px;height:21px;background:#ece9d8"></div>
  <div class="a" style="left:4px;top:50px;width:606px;height:1px;background:#aca899"></div>
  <div class="a" style="left:4px;top:51px;width:606px;height:1px;background:#fff"></div>
  <div class="t" style="left:9px;top:34px">File</div>
  <div class="t" style="left:37px;top:34px">Edit</div>
  <div class="t" style="left:67px;top:34px">Format</div>
  <div class="t" style="left:113px;top:34px">Message</div>
  <div class="t" style="left:164px;top:34px">Collaborate</div>
  <div class="t" style="left:232px;top:34px">View</div>
  <div class="t" style="left:266px;top:34px">Help</div>

  <!-- toolbar -->
  <div class="a" style="left:4px;top:52px;width:606px;height:51px;background:#b0cbf2"></div>
  <div class="a" style="left:4px;top:103px;width:606px;height:11px;background:#c3d7f6"></div>
  <div class="a" style="left:4px;top:114px;width:606px;height:1px;background:#aca899"></div>
  <div class="sep" style="left:119px;top:54px;height:56px"></div>
  <svg class="a" style="left:16px;top:58px" width="32" height="32"><use href="#goBack"/></svg>
  <svg class="a" style="left:70px;top:58px" width="32" height="32"><use href="#goFwd"/></svg>
  <div class="dis" style="left:11px;top:94px;letter-spacing:-0.26px">Go Back</div>
  <div class="dis" style="left:56px;top:94px;letter-spacing:0.1px">Go Forward</div>
  <svg class="a" style="left:146px;top:57px" width="32" height="32"><use href="#cloudQ"/></svg>
  <svg class="a" style="left:204px;top:57px" width="33" height="33" viewBox="0 0 33 33">
    <path d="M2 10 C0 5 4 1 9 2 C12 -1 19 -1 21 2 C26 0 32 4 31 9 C33 13 29 18 23 17 C20 19 12 19 10 16 C5 18 1 15 2 10Z" fill="#fff" stroke="#8ccbe8" stroke-width="1.4"/>
    <path d="M11 7.5 C10.7 3.8 17 3.8 16.7 7 C16.5 9.5 14 10 14 13" fill="none" stroke="#1d4f8f" stroke-width="2.8" stroke-linecap="round"/>
    <circle cx="14" cy="15.6" r="1.4" fill="#1d4f8f"/>
    <path d="M25.5 4.5 C27.7 3.8 28.7 6.2 27.1 7.6 L20.9 13.2 L19.3 12.2Z" fill="#1d4f8f"/>
    <path d="M0.3 22.7 L9.6 13.2 V19 H21 C24 19 25 17 24.5 15 L30.5 15.5 C31.5 22 28 26 21 26 H9.6 V31.8 Z" fill="#8a2ec8"/>
    <path d="M10 19.5 H21 C24 19.5 25.5 17.5 25 15.5" fill="none" stroke="#b070e8" stroke-width="1"/>
  </svg>
  <div class="t" style="left:126px;top:94px;letter-spacing:0.0px">New Message</div>
  <div class="t" style="left:205px;top:94px;letter-spacing:-0.19px">Reply</div>

  <!-- left strip & panel -->
  <div class="a" style="left:4px;top:115px;width:7px;height:245px;background:#ece9d8;border-left:1px solid #fff"></div>
  <div class="a" style="left:11px;top:115px;width:1px;height:245px;background:#aca899"></div>
  <svg class="a" style="left:5px;top:230px" width="6" height="11"><path d="M0 0 L5 5.5 L0 11Z" fill="#000"/></svg>
  <div class="a" style="left:12px;top:115px;width:598px;height:245px;background:#fcfcfc"></div>

  <!-- header bar -->
  <div class="a" style="left:12px;top:115px;width:598px;height:18px;background:#ece9d8"></div>
  <div class="a" style="left:12px;top:133px;width:598px;height:1px;background:#aca899"></div>
  <svg class="a" style="left:16px;top:117px" width="17" height="16" viewBox="0 0 64 64"><use href="#pplT"/></svg>
  <div class="t" style="left:37px;top:119px;letter-spacing:0.09px">Discussion</div>
  <div class="t" style="left:100px;top:119px;letter-spacing:-0.47px">9 Fles</div>
  <div class="t" style="left:133px;top:119px;letter-spacing:-0.15px">0 Folders</div>
  <div class="t" style="left:199px;top:119px;letter-spacing:-0.17px">Avalon : Michael Goodman</div>
  <div class="a" style="left:338px;top:118px;width:100px;height:11px;background:#fff;border-left:1px solid #c8d4e8"></div>
  <div class="t" style="left:364px;top:119px;letter-spacing:-0.33px">48M Free</div>
  <svg class="a" style="left:547px;top:117px" width="62" height="16"><use href="#hdrIcons"/></svg>

  <!-- list header -->
  <div class="a" style="left:12px;top:134px;width:598px;height:16px;background:#ece9d8"></div>
  <div class="a" style="left:12px;top:150px;width:598px;height:1px;background:#c9c5b6"></div>

  <!-- wash -->
  <svg class="a" style="left:11px;top:151px" width="599" height="193" viewBox="0 0 599 193">
    <path d="M0 0 H250 L245 10 L180 17 L175 25 L170 35 L166 45 L160 55 L153 70 L156 80 L153 90 L160 100 L162 110 L165 124 L280 129 L170 136 L172 150 L175 165 L172 180 L160 193 H0Z" fill="#d0e7f5"/>
    <path d="M0 0 H150 L140 14 L130 30 L140 45 L125 62 L110 80 L95 95 L70 110 L50 122 L40 130 L60 134 L20 140 L45 146 L10 152 L0 155Z" fill="#b8cff2"/>
    <path d="M0 0 H58 L62 20 L66 40 L58 58 L50 75 L35 95 L15 115 L0 125Z" fill="#a3c5e3"/>
    <path d="M0 0 H25 L40 30 L30 60 L20 90 L0 110Z" fill="#9abcdc"/>
  </svg>

  <!-- header icons -->
  <svg class="a" style="left:13px;top:137px" width="15" height="11"><use href="#env"/></svg>
  <svg class="a" style="left:29px;top:137px;color:#e00000" width="7" height="9"><use href="#flag"/></svg>
  <div class="a" style="left:40px;top:136px;width:2px;height:13px;border-left:1px solid #d0ccbc;border-right:1px solid #fff"></div>
  <svg class="a" style="left:42px;top:136px" width="7" height="12"><use href="#clip"/></svg>
  <div class="a" style="left:51px;top:136px;width:2px;height:13px;border-left:1px solid #d0ccbc;border-right:1px solid #fff"></div>
  <svg class="a" style="left:54px;top:138px" width="9" height="9"><use href="#minus"/></svg>
  <div class="a" style="left:65px;top:136px;width:2px;height:13px;border-left:1px solid #d0ccbc;border-right:1px solid #fff"></div>
  <div class="lt" style="left:69px;top:136px;letter-spacing:0.85px">Subjec:</div>
  <div class="a" style="left:397px;top:136px;width:2px;height:13px;border-left:1px solid #d0ccbc;border-right:1px solid #fff"></div>
  <div class="lt" style="left:402px;top:136px;letter-spacing:0.39px">Name</div>

  <!-- selection -->
  <div class="a" style="left:68px;top:151px;width:328px;height:17px;background:#316ac5"></div>
  <div class="a" style="left:401px;top:151px;width:209px;height:17px;background:#316ac5"></div>

  <div id="rows">
<svg class="a" style="left:13px;top:155px" width="15" height="11"><use href="#envG"/></svg>
<svg class="a" style="left:29px;top:155px;color:#a00000" width="7" height="9"><use href="#flag"/></svg>
<svg class="a" style="left:54px;top:155px" width="9" height="9"><use href="#minus"/></svg>
<div class="lt" style="left:69px;top:153px;color:#fff;letter-spacing:0.92px">Re: A question about the carbon cycle diagram</div>
<div class="lt" style="left:402px;top:153px;color:#fff;letter-spacing:0.61px">Michael Goodman</div>
<svg class="a" style="left:13px;top:173px" width="15" height="11"><use href="#env"/></svg>
<div class="lt" style="left:90px;top:171px;color:#000;letter-spacing:0.89px">A question about the carbon cycle diagram</div>
<div class="lt" style="left:402px;top:171px;color:#000;letter-spacing:0.59px">Moira Less</div>
<svg class="a" style="left:13px;top:191px" width="15" height="11"><use href="#env"/></svg>
<svg class="a" style="left:29px;top:191px;color:#e00000" width="7" height="9"><use href="#flag"/></svg>
<svg class="a" style="left:54px;top:191px" width="9" height="9"><use href="#minus"/></svg>
<div class="lt" style="left:69px;top:189px;color:#000;letter-spacing:0.72px">Re(2): Do people really live in domes?</div>
<div class="lt" style="left:402px;top:189px;color:#000;letter-spacing:0.59px">Moira Less</div>
<svg class="a" style="left:13px;top:209px" width="15" height="11"><use href="#env"/></svg>
<svg class="a" style="left:29px;top:209px;color:#e00000" width="7" height="9"><use href="#flag"/></svg>
<div class="lt" style="left:90px;top:207px;color:#000;letter-spacing:0.6px">Re: Do people really live in domes?</div>
<div class="lt" style="left:402px;top:207px;color:#000;letter-spacing:0.46px">Edna Cloud</div>
<svg class="a" style="left:13px;top:227px" width="15" height="11"><use href="#env"/></svg>
<svg class="a" style="left:29px;top:227px;color:#e00000" width="7" height="9"><use href="#flag"/></svg>
<div class="lt" style="left:90px;top:225px;color:#000;letter-spacing:0.57px">Do people really live in domes?</div>
<div class="lt" style="left:402px;top:225px;color:#000;letter-spacing:0.89px">Willy Tert</div>
<svg class="a" style="left:13px;top:245px" width="15" height="11"><use href="#env"/></svg>
<svg class="a" style="left:29px;top:245px;color:#e00000" width="7" height="9"><use href="#flag"/></svg>
<svg class="a" style="left:54px;top:245px" width="9" height="9"><use href="#minus"/></svg>
<div class="lt" style="left:69px;top:243px;color:#000;letter-spacing:0.96px">Re(3): A question about ecosystems</div>
<div class="lt" style="left:402px;top:243px;color:#000;letter-spacing:0.46px">Edna Cloud</div>
<svg class="a" style="left:13px;top:263px" width="15" height="11"><use href="#env"/></svg>
<svg class="a" style="left:29px;top:263px;color:#e00000" width="7" height="9"><use href="#flag"/></svg>
<div class="lt" style="left:90px;top:261px;color:#000;letter-spacing:0.93px">Re(2): A question about ecosystems</div>
<div class="lt" style="left:402px;top:261px;color:#000;letter-spacing:0.89px">Willy Tert</div>
<svg class="a" style="left:13px;top:281px" width="15" height="11"><use href="#env"/></svg>
<svg class="a" style="left:29px;top:281px;color:#e00000" width="7" height="9"><use href="#flag"/></svg>
<div class="lt" style="left:90px;top:279px;color:#000;letter-spacing:0.89px">Re: A question about ecosystems</div>
<div class="lt" style="left:402px;top:279px;color:#000;letter-spacing:0.74px">Helen Highwater</div>
<svg class="a" style="left:13px;top:299px" width="15" height="11"><use href="#env"/></svg>
<svg class="a" style="left:29px;top:299px;color:#e00000" width="7" height="9"><use href="#flag"/></svg>
<div class="lt" style="left:90px;top:297px;color:#000;letter-spacing:0.84px">A question about ecosystems</div>
<div class="lt" style="left:402px;top:297px;color:#000;letter-spacing:0.61px">Michael Goodman</div>
</div>

  <!-- scrollbar -->
  <svg class="a" style="left:12px;top:344px" width="16" height="16"><use href="#sbL"/></svg>
  <div class="a" style="left:29px;top:344px;width:249px;height:16px;border:1px solid #fff;border-radius:2px;background:linear-gradient(#c6d8f8,#b8cef4 60%,#aac4f0)"></div>
  <svg class="a" style="left:149px;top:348px" width="8" height="8"><path d="M0.5 0v8M2.5 0v8M4.5 0v8M6.5 0v8" stroke="#8aa4d8" stroke-width="1"/></svg>
  <svg class="a" style="left:593px;top:344px" width="15" height="15"><use href="#sbR"/></svg>

  <!-- status -->
  <div class="a" style="left:4px;top:360px;width:606px;height:1px;background:#aca899"></div>
  <div class="a" style="left:4px;top:361px;width:606px;height:26px;background:#ece9d8"></div>
  <svg class="a" style="left:10px;top:367px" width="16" height="16"><use href="#stL"/></svg>
  <div class="a" style="left:43px;top:365px;width:1px;height:20px;background:#aca899"></div>
  <div class="t" style="left:60px;top:371px;letter-spacing:-0.17px">1 Item seleced.</div>
  <svg class="a" style="left:572px;top:367px" width="16" height="16"><use href="#stR"/></svg>
</div>

<div id="frame"></div>
</body></html>
